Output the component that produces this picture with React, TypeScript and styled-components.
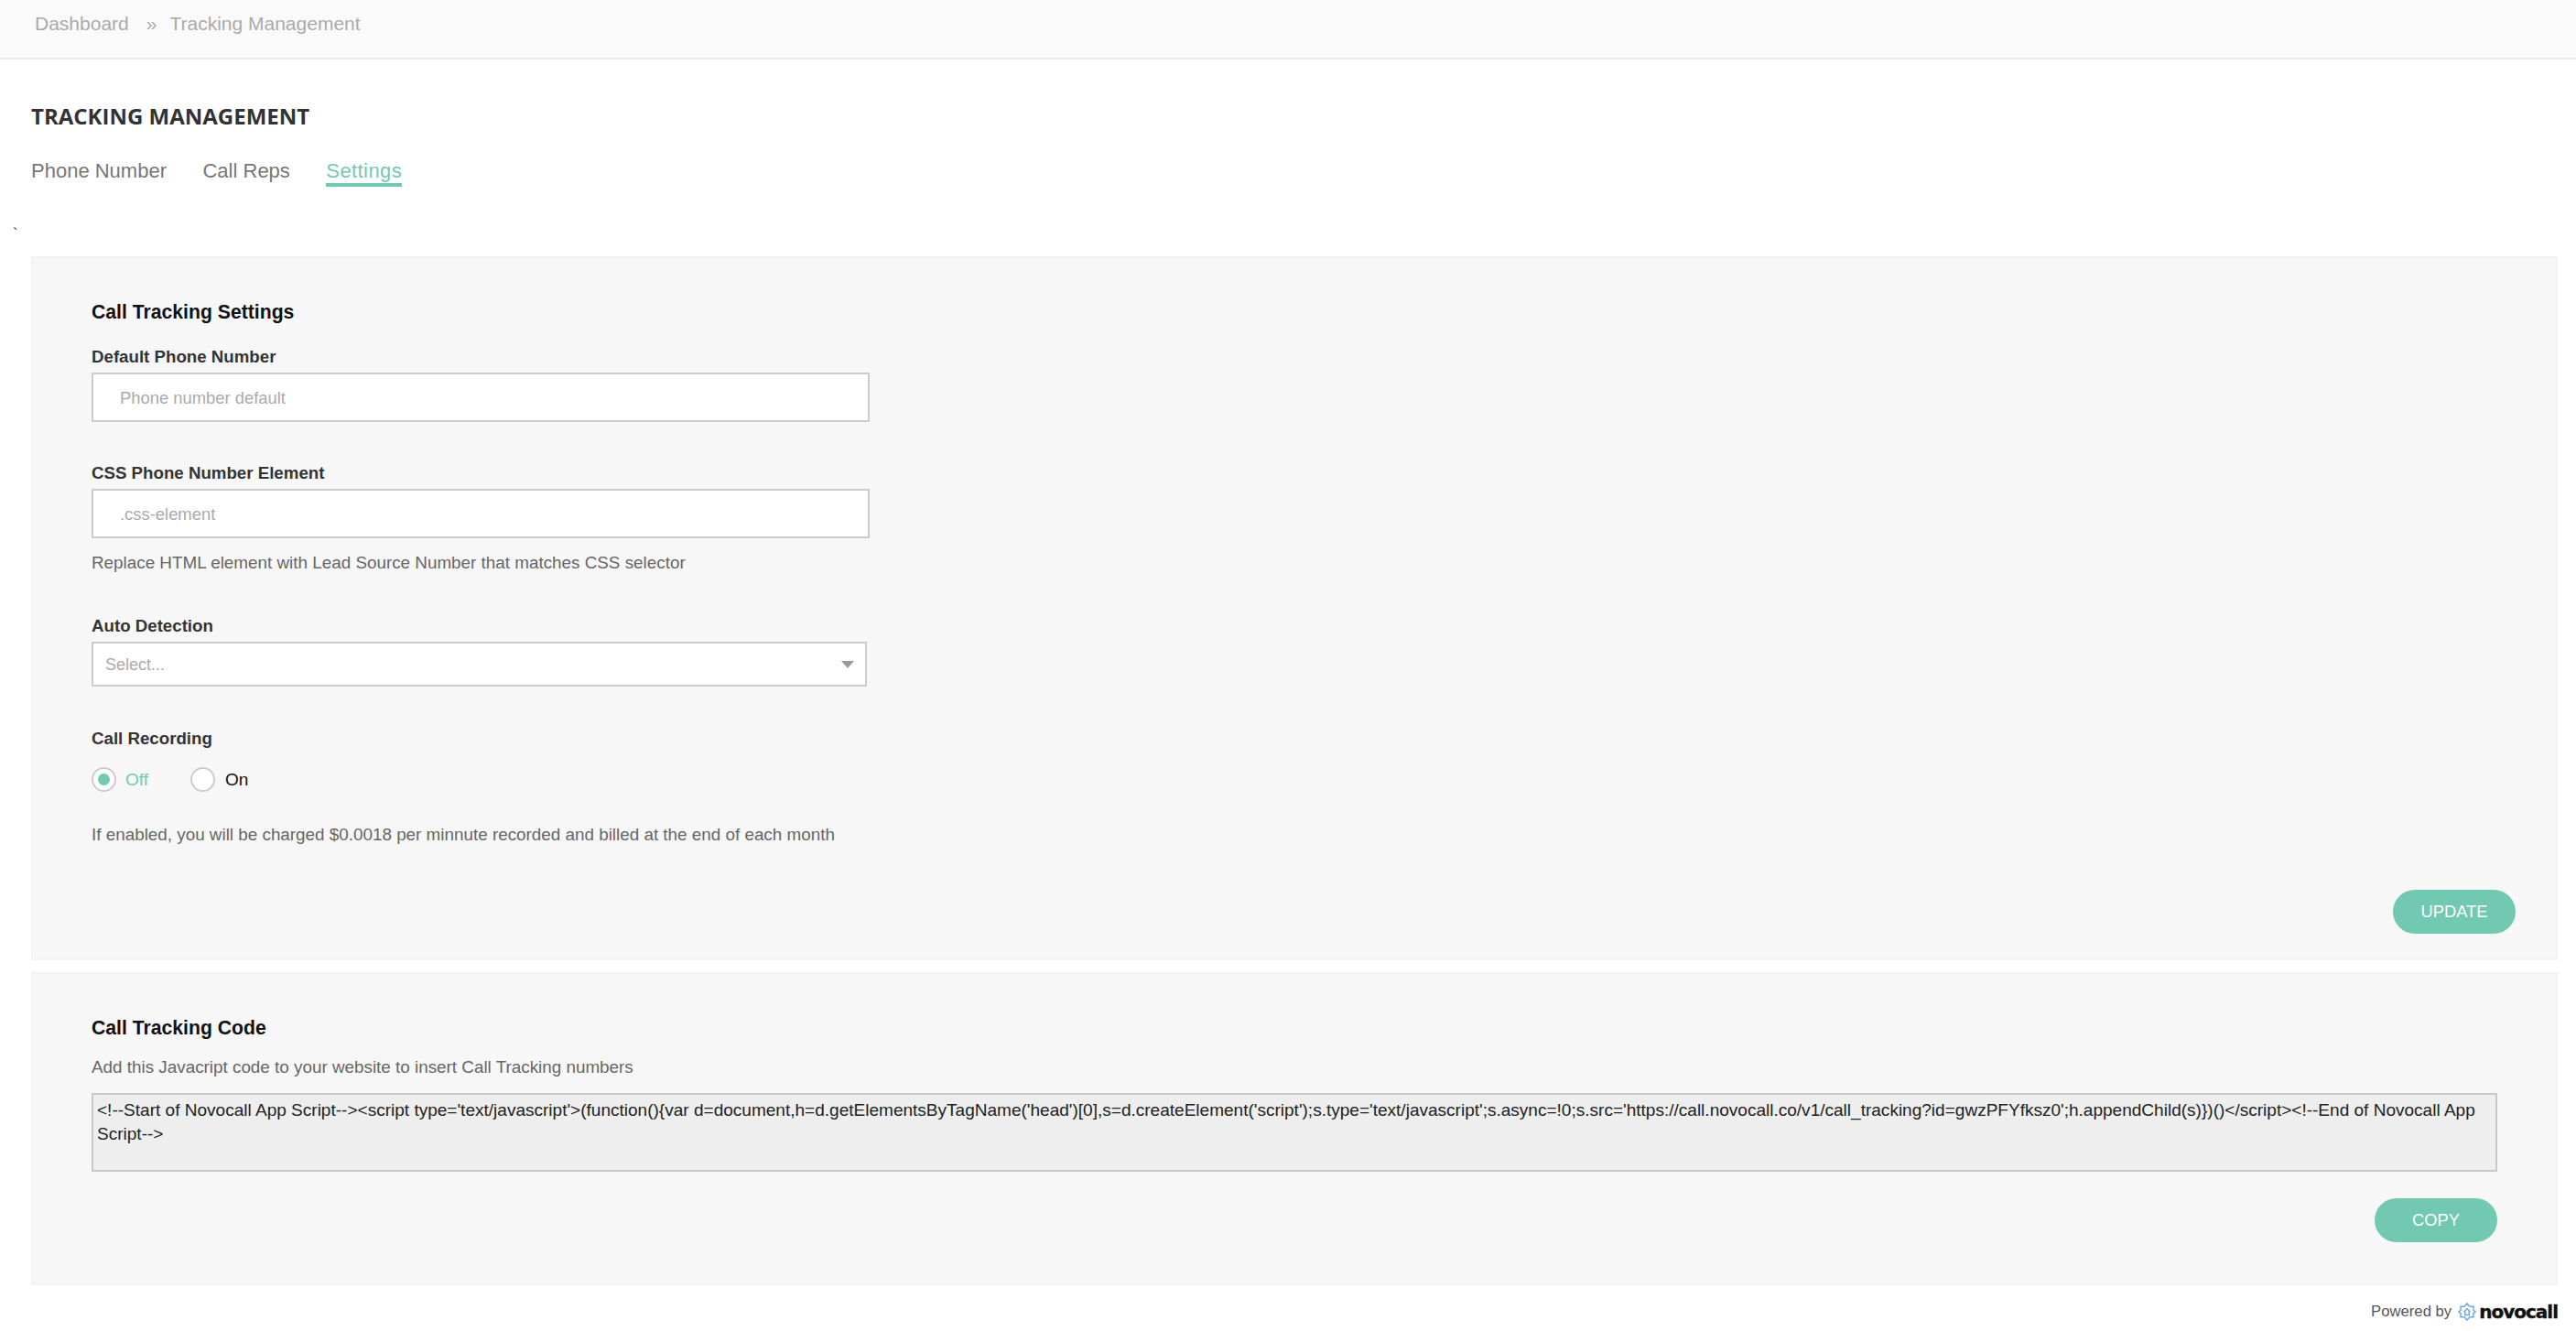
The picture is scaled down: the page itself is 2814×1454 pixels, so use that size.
import React from 'react';
import styled, { createGlobalStyle } from 'styled-components';

const teal = '#72c9b1';
const sans = '"Liberation Sans", Arial, sans-serif';

const GlobalStyle = createGlobalStyle`
  html, body {
    margin: 0;
    padding: 0;
    background: #fff;
    font-family: ${sans};
  }
`;

const Page = styled.div`
  width: 2814px;
  height: 1454px;
  overflow: hidden;
  position: relative;
`;

const Breadcrumbs = styled.div`
  height: 65px;
  box-sizing: border-box;
  background: #fafafa;
  border-bottom: 2px solid #e9ebee;
  padding: 12px 0 0 38px;
  display: flex;
  align-items: flex-start;
  color: #aaa;
  font-size: 21px;
  line-height: 28px;
`;

const Crumb = styled.span``;

const CrumbSeparator = styled.span`
  margin: 0 14px 0 19px;
`;

const Main = styled.div`
  padding: 0 20px 0 34px;
`;

const Title = styled.h1`
  margin: 46px 0 0;
  font-family: "Open Sans", sans-serif;
  font-size: 24px;
  line-height: 32px;
  font-weight: 700;
  color: #333;
`;

const Tabs = styled.div`
  display: flex;
  gap: 39.5px;
  margin-top: 27px;
  height: 34px;
`;

const Tab = styled.div<{ $active?: boolean }>`
  font-size: 22px;
  line-height: 28px;
  height: 34px;
  padding-top: 3px;
  box-sizing: border-box;
  letter-spacing: ${(p) => (p.$active ? '0.4px' : '0')};
  color: ${(p) => (p.$active ? teal : '#777')};
  border-bottom: ${(p) => (p.$active ? `4px solid ${teal}` : 'none')};
`;

const Tick = styled.div`
  height: 76px;
  margin-left: -20px;
  padding-top: 43px;
  box-sizing: border-box;
  font-size: 16px;
  line-height: 18px;
  color: #333;
`;

const Panel = styled.section<{ $height: number; $right: number }>`
  height: ${(p) => p.$height}px;
  box-sizing: border-box;
  background: #f7f7f7;
  border: 2px solid #f3f3f3;
  padding: 0 ${(p) => p.$right}px 0 64px;
  display: flex;
  flex-direction: column;
  & + & {
    margin-top: 13px;
  }
`;

const Heading = styled.h2`
  margin: 46px 0 0;
  font-size: 21.2px;
  line-height: 26px;
  font-weight: 700;
  color: #111;
`;

const Label = styled.label<{ $top: number }>`
  display: block;
  margin-top: ${(p) => p.$top}px;
  font-size: 18.7px;
  line-height: 22px;
  font-weight: 700;
  color: #333;
`;

const Input = styled.input`
  display: block;
  width: 850px;
  height: 54px;
  box-sizing: border-box;
  margin-top: 6px;
  padding: 2px 29px 0;
  background: #fff;
  border: 2px solid #ccc;
  border-radius: 0;
  outline: none;
  font-family: ${sans};
  font-size: 18.4px;
  &::placeholder {
    color: #aaa;
    opacity: 1;
  }
`;

const Help = styled.p<{ $top: number }>`
  margin: ${(p) => p.$top}px 0 0;
  font-size: 18.85px;
  line-height: 24px;
  color: #666;
`;

const Select = styled.div`
  width: 847px;
  height: 49px;
  box-sizing: border-box;
  margin-top: 6px;
  padding: 1px 12px 0 13px;
  background: #fff;
  border: 2px solid #ccc;
  display: flex;
  align-items: center;
  justify-content: space-between;
  color: #aaa;
  font-size: 18px;
`;

const Caret = styled.span`
  width: 0;
  height: 0;
  border-left: 7px solid transparent;
  border-right: 7px solid transparent;
  border-top: 8px solid #999;
`;

const RadioGroup = styled.div`
  display: flex;
  align-items: center;
  gap: 46px;
  margin-top: 20px;
`;

const RadioOption = styled.div<{ $checked?: boolean }>`
  display: flex;
  align-items: center;
  gap: ${(p) => (p.$checked ? 10 : 11)}px;
  font-size: 19px;
  color: ${(p) => (p.$checked ? teal : '#111')};
`;

const RadioCircle = styled.span<{ $checked?: boolean }>`
  width: 27px;
  height: 27px;
  box-sizing: border-box;
  border-radius: 50%;
  border: 2px solid #ccc;
  background: #fff;
  display: flex;
  align-items: center;
  justify-content: center;
  &::after {
    content: '';
    display: ${(p) => (p.$checked ? 'block' : 'none')};
    width: 13px;
    height: 13px;
    border-radius: 50%;
    background: ${teal};
  }
`;

const ActionRow = styled.div<{ $top: number }>`
  display: flex;
  justify-content: flex-end;
  margin-top: ${(p) => p.$top}px;
`;

const ActionButton = styled.button`
  width: 134px;
  height: 48px;
  border: none;
  border-radius: 24px;
  background: ${teal};
  color: #fff;
  font-family: ${sans};
  font-size: 18.3px;
`;

const CodeBox = styled.div`
  height: 86px;
  box-sizing: border-box;
  margin-top: 16px;
  padding: 4px 4px;
  background: #eee;
  border: 2px solid #c8c8c8;
  font-size: 19.05px;
  line-height: 26px;
  color: #222;
`;

const Footer = styled.div`
  display: flex;
  justify-content: flex-end;
  align-items: center;
  height: 58px;
  padding-right: 20px;
  gap: 7px;
  font-size: 16.7px;
  color: #555;
`;

const Brand = styled.span`
  display: flex;
  align-items: center;
  gap: 3px;
  font-family: "DejaVu Sans", sans-serif;
  font-size: 20px;
  font-weight: 700;
  letter-spacing: -1px;
  -webkit-text-stroke: 0.4px #111;
  color: #111;
`;

const BrandMark = () => (
  <svg width="20" height="20" viewBox="0 0 20 20" fill="none" stroke="#6ea8ea" strokeWidth="1.5">
    <path d="M10 1l3 3.200h4v4.200l2 1.600-2 1.600v4.200h-4L10 19l-3-3.200H3v-4.200L1 10l2-1.600V4.200h4z" />
    <path d="M6.500 10L10 6.800l3.500 3.200M7.800 9v4.500h4.400V9" />
  </svg>
);

const code =
  "<!--Start of Novocall App Script--><script type='text/javascript'>(function(){var d=document,h=d.getElementsByTagName('head')[0],s=d.createElement('script');s.type='text/javascript';s.async=!0;s.src='https://call.novocall.co/v1/call_tracking?id=gwzPFYfksz0';h.appendChild(s)})()</script><!--End of Novocall App Script-->";

const App = (): JSX.Element => (
  <Page>
    <GlobalStyle />
    <Breadcrumbs>
      <Crumb>Dashboard</Crumb>
      <CrumbSeparator>»</CrumbSeparator>
      <Crumb>Tracking Management</Crumb>
    </Breadcrumbs>
    <Main>
      <Title>TRACKING MANAGEMENT</Title>
      <Tabs>
        <Tab>Phone Number</Tab>
        <Tab>Call Reps</Tab>
        <Tab $active>Settings</Tab>
      </Tabs>
      <Tick>`</Tick>
      <Panel $height={769} $right={44}>
        <Heading>Call Tracking Settings</Heading>
        <Label $top={25}>Default Phone Number</Label>
        <Input placeholder="Phone number default" readOnly />
        <Label $top={45}>CSS Phone Number Element</Label>
        <Input placeholder=".css-element" readOnly />
        <Help $top={15}>Replace HTML element with Lead Source Number that matches CSS selector</Help>
        <Label $top={46}>Auto Detection</Label>
        <Select>
          Select...
          <Caret />
        </Select>
        <Label $top={46}>Call Recording</Label>
        <RadioGroup>
          <RadioOption $checked>
            <RadioCircle $checked />
            Off
          </RadioOption>
          <RadioOption>
            <RadioCircle />
            On
          </RadioOption>
        </RadioGroup>
        <Help $top={35}>If enabled, you will be charged $0.0018 per minnute recorded and billed at the end of each month</Help>
        <ActionRow $top={48}>
          <ActionButton>UPDATE</ActionButton>
        </ActionRow>
      </Panel>
      <Panel $height={342} $right={64}>
        <Heading>Call Tracking Code</Heading>
        <Help $top={18}>Add this Javacript code to your website to insert Call Tracking numbers</Help>
        <CodeBox>{code}</CodeBox>
        <ActionRow $top={29}>
          <ActionButton>COPY</ActionButton>
        </ActionRow>
      </Panel>
    </Main>
    <Footer>
      Powered by
      <Brand>
        <BrandMark />
        novocall
      </Brand>
    </Footer>
  </Page>
);

export default App;
